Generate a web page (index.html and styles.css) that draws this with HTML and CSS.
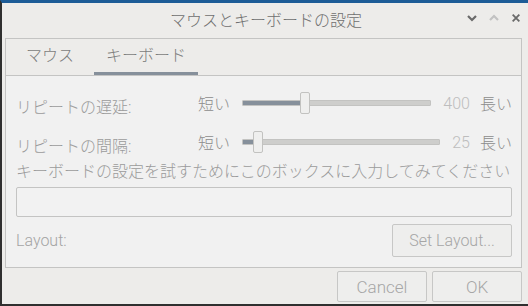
FILE: index.html
```html
<!DOCTYPE html>
<html lang="ja">
<head>
<meta charset="utf-8">
<link rel="stylesheet" href="styles.css">
</head>
<body>
<div class="window">
  <div class="titlebar">
    <div class="title">マウスとキーボードの設定</div>
    <div class="wm-buttons">
      <svg class="wm" width="12" height="10" viewBox="0 0 12 10"><path d="M2 3 L6 7 L10 3" fill="none" stroke="#6a6a6a" stroke-width="2.2"/></svg>
      <svg class="wm" width="12" height="10" viewBox="0 0 12 10"><path d="M2 7 L6 3 L10 7" fill="none" stroke="#c2c2c2" stroke-width="2.2"/></svg>
      <svg class="wm" width="12" height="10" viewBox="0 0 12 12"><path d="M2 2 L10 10 M10 2 L2 10" fill="none" stroke="#6a6a6a" stroke-width="2.2"/></svg>
    </div>
  </div>
  <div class="body">
    <div class="notebook">
      <div class="tabs">
        <div class="tab">マウス</div>
        <div class="tab active">キーボード</div>
      </div>
      <div class="page">
        <div class="row">
          <div class="label">リピートの遅延:</div>
          <div class="short">短い</div>
          <div class="slider">
            <div class="track"><div class="fill" style="width:58px"></div></div>
            <div class="handle" style="left:58px"></div>
          </div>
          <div class="value">400</div>
          <div class="long">長い</div>
        </div>
        <div class="row row2">
          <div class="label">リピートの間隔:</div>
          <div class="short">短い</div>
          <div class="slider">
            <div class="track"><div class="fill" style="width:11px"></div></div>
            <div class="handle" style="left:11px"></div>
          </div>
          <div class="value">25</div>
          <div class="long">長い</div>
        </div>
        <div class="hint">キーボードの設定を試すためにこのボックスに入力してみてください</div>
        <div class="entry"></div>
        <div class="layout-row">
          <div class="layout-label">Layout:</div>
          <div class="btn setlayout">Set Layout...</div>
        </div>
      </div>
    </div>
    <div class="actions">
      <div class="btn action">Cancel</div>
      <div class="btn action">OK</div>
    </div>
  </div>
</div>
</body>
</html>
```
FILE: styles.css
```css
* { box-sizing: border-box; }
html, body { margin: 0; padding: 0; }
body {
  width: 528px;
  height: 306px;
  overflow: hidden;
  font-family: Roboto, "Noto Sans CJK JP", sans-serif;
  font-weight: 300;
  font-size: 16px;
  background: #edecea;
}
.window {
  width: 528px;
  height: 306px;
  border-left: 2px solid #2f2f2f;
  border-top: 3px solid #1d5c97;
  border-bottom: 2px solid #2f2f2f;
  background: #edecea;
  display: flex;
  flex-direction: column;
}
.titlebar {
  height: 35px;
  display: flex;
  align-items: center;
  justify-content: center;
  position: relative;
}
.title {
  color: #6f6f6f;
  font-size: 16px;
  line-height: 20px;
  margin-left: 2px;
}
.wm-buttons {
  position: absolute;
  right: 6px;
  top: 10px;
  display: flex;
  gap: 10px;
}
.wm { display: block; }
.body {
  flex: 1;
  display: flex;
  flex-direction: column;
  padding: 0 6px 0 3px;
}
.notebook {
  width: 517px;
  height: 230px;
  border: 1px solid #c4c4c3;
  display: flex;
  flex-direction: column;
}
.tabs {
  height: 37px;
  display: flex;
  gap: 8px;
  padding-left: 8px;
  border-bottom: 1px solid #c4c4c3;
}
.tab {
  padding: 0 12px;
  line-height: 34px;
  color: #7c7c7c;
  border-bottom: 3px solid transparent;
}
.tab.active { border-bottom-color: #86909b; }
.page {
  flex: 1;
  background: #f1f1f1;
  padding: 16px 9px 10px 10px;
  display: flex;
  flex-direction: column;
}
.row {
  height: 22px;
  display: flex;
  align-items: center;
}
.row2 { margin-top: 17px; }
.label {
  width: 182px;
  color: #9b9b9b;
  position: relative;
  top: 3px;
}
.short, .long { color: #8c8c8c; }
.slider {
  flex: 1;
  height: 22px;
  margin: 0 12px;
  position: relative;
  display: flex;
  align-items: center;
}
.track {
  width: 100%;
  height: 6px;
  background: #cececc;
  border: 1px solid #c3c3c1;
  border-radius: 1px;
  position: relative;
  overflow: hidden;
}
.fill {
  position: absolute;
  left: 0;
  top: -1px;
  bottom: -1px;
  background: #86909b;
}
.handle {
  position: absolute;
  top: 0;
  width: 10px;
  height: 22px;
  background: #efefee;
  border: 1px solid #c2c2c0;
  border-radius: 2px;
}
.value {
  color: #bdbdbd;
  margin-right: 10px;
}
.hint {
  margin-top: 9px;
  line-height: 20px;
  color: #9b9b9b;
  white-space: nowrap;
}
.entry {
  margin-top: 5px;
  width: 496px;
  height: 30px;
  border: 1px solid #c4c4c3;
  border-radius: 2px;
  background: #f2f2f2;
}
.layout-row {
  margin-top: 7px;
  height: 33px;
  display: flex;
  align-items: center;
  justify-content: space-between;
  width: 496px;
}
.layout-label { color: #a4a4a4; }
.btn {
  border: 1px solid #c7c7c6;
  border-radius: 2px;
  background: #eeeeed;
  color: #a6a6a6;
  display: flex;
  align-items: center;
  justify-content: center;
}
.setlayout {
  width: 120px;
  height: 33px;
}
.actions {
  flex: 1;
  display: flex;
  justify-content: flex-end;
  gap: 5px;
  padding-top: 3px;
}
.action {
  width: 90px;
  height: 31px;
  font-size: 17px;
}
```
